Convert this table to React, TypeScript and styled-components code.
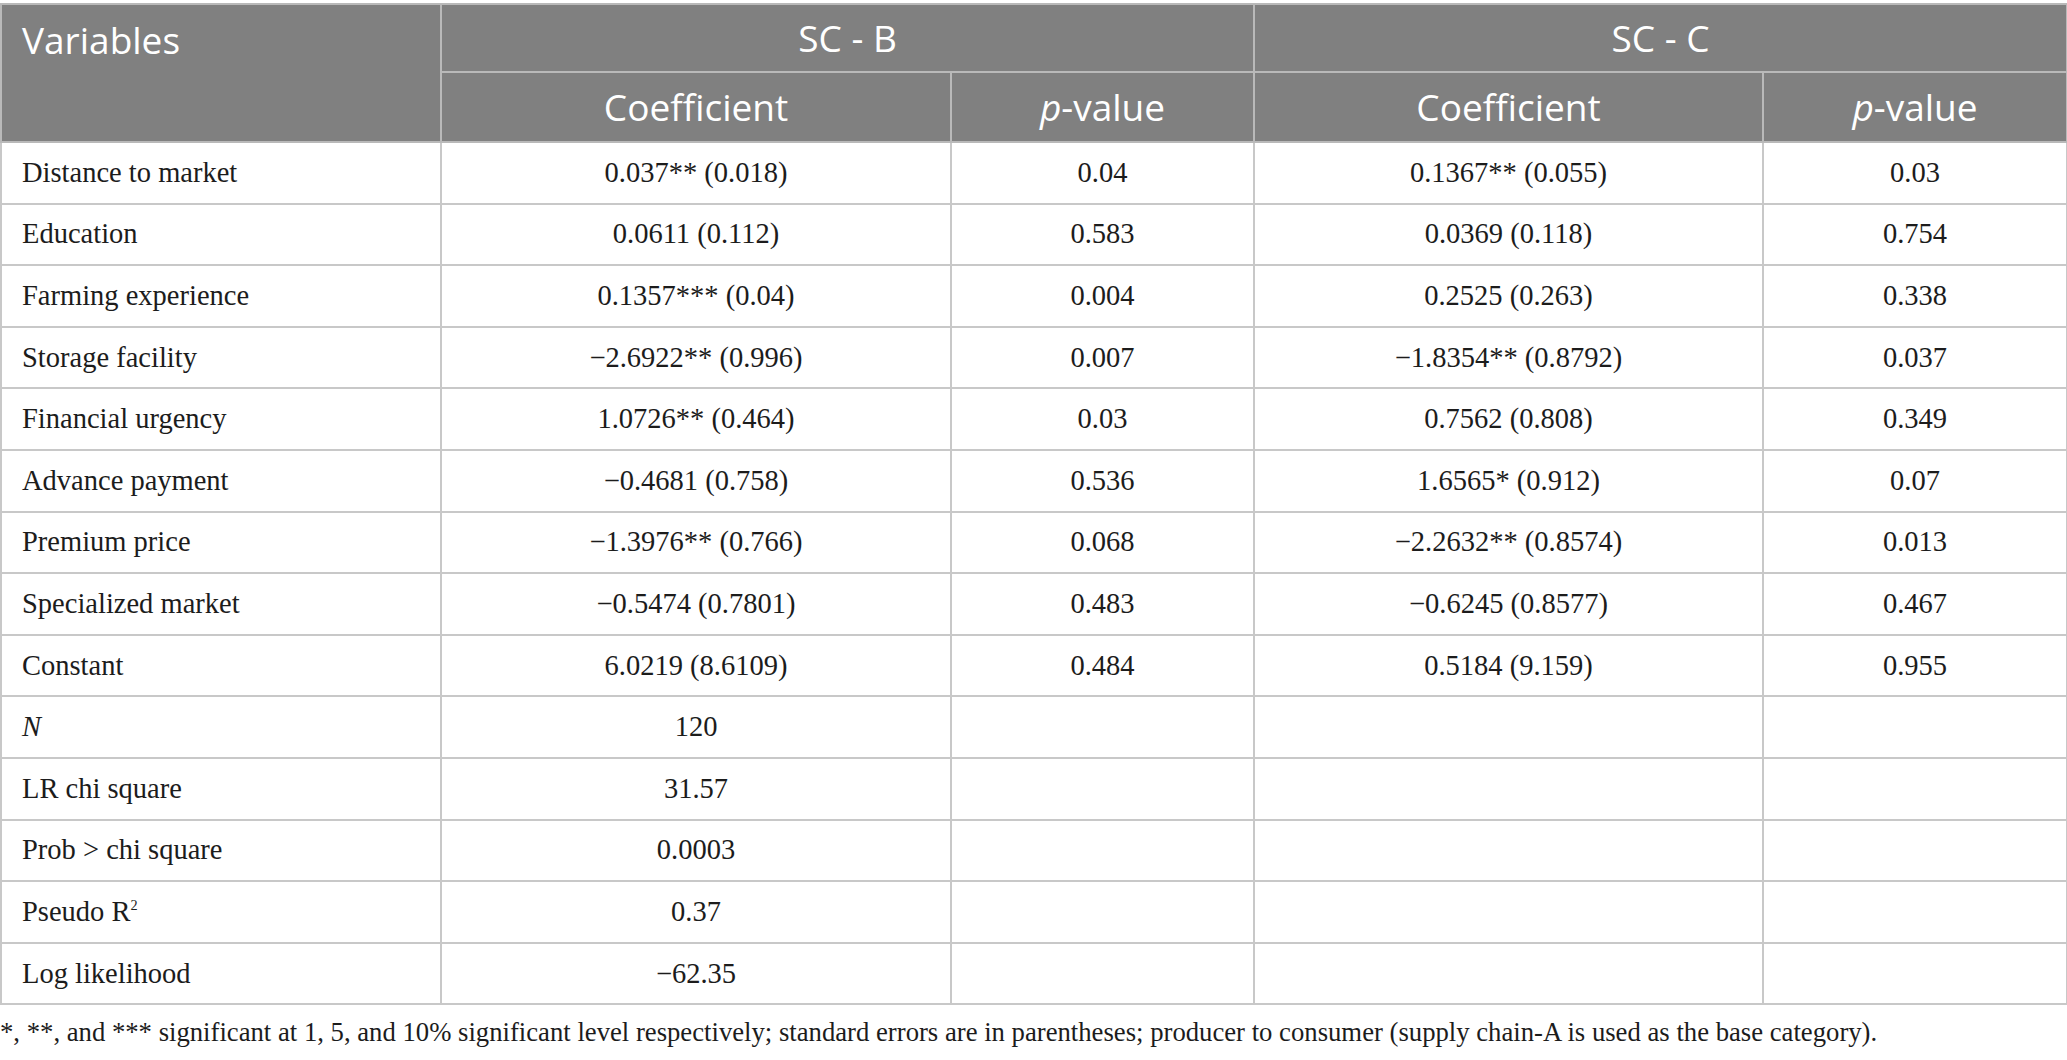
import React from "react";
import styled, { createGlobalStyle } from "styled-components";

const Global = createGlobalStyle`
  html, body { margin: 0; padding: 0; background: #ffffff; }
  body { font-family: "Liberation Serif", "Times New Roman", serif; color: #1f1f1f; }
`;

const Page = styled.div`
  padding-top: 3px;
  width: 2067px;
`;

const Table = styled.table`
  border-collapse: collapse;
  table-layout: fixed;
  width: 2066px;
`;

const HeadCell = styled.th<{ $align?: "left" | "center"; $top?: boolean }>`
  background: #808080;
  color: #ffffff;
  font-family: "Open Sans", "Noto Sans", sans-serif;
  font-weight: 400;
  font-size: 37px;
  line-height: 48px;
  border: 2px solid #b9b9b9;
  padding: ${(p) => (p.$top ? "11px 20px 0" : "0 20px")};
  text-align: ${(p) => p.$align ?? "center"};
  vertical-align: ${(p) => (p.$top ? "top" : "middle")};
`;

const HeadRow = styled.tr<{ $h: number }>`
  height: ${(p) => p.$h}px;
`;

const BodyRow = styled.tr`
  height: 61.6px;
`;

const Cell = styled.td<{ $first?: boolean }>`
  font-family: "Liberation Serif", "Times New Roman", serif;
  font-size: 28.5px;
  line-height: 32px;
  color: #1c1c1c;
  border: 2px solid #c8c8c8;
  padding: 0 20px;
  text-align: ${(p) => (p.$first ? "left" : "center")};
  vertical-align: middle;
  white-space: nowrap;
`;

const Footnote = styled.p`
  margin: 12px 0 0;
  font-family: "Liberation Serif", "Times New Roman", serif;
  font-size: 26.7px;
  line-height: 31px;
  color: #1c1c1c;
`;

const Sup = styled.sup`
  font-size: 0.5em;
  vertical-align: 0.75em;
  line-height: 0;
`;

type Row = { label: React.ReactNode; cells: string[] };

const rows: Row[] = [
  { label: "Distance to market", cells: ["0.037** (0.018)", "0.04", "0.1367** (0.055)", "0.03"] },
  { label: "Education", cells: ["0.0611 (0.112)", "0.583", "0.0369 (0.118)", "0.754"] },
  { label: "Farming experience", cells: ["0.1357*** (0.04)", "0.004", "0.2525 (0.263)", "0.338"] },
  { label: "Storage facility", cells: ["\u22122.6922** (0.996)", "0.007", "\u22121.8354** (0.8792)", "0.037"] },
  { label: "Financial urgency", cells: ["1.0726** (0.464)", "0.03", "0.7562 (0.808)", "0.349"] },
  { label: "Advance payment", cells: ["\u22120.4681 (0.758)", "0.536", "1.6565* (0.912)", "0.07"] },
  { label: "Premium price", cells: ["\u22121.3976** (0.766)", "0.068", "\u22122.2632** (0.8574)", "0.013"] },
  { label: "Specialized market", cells: ["\u22120.5474 (0.7801)", "0.483", "\u22120.6245 (0.8577)", "0.467"] },
  { label: "Constant", cells: ["6.0219 (8.6109)", "0.484", "0.5184 (9.159)", "0.955"] },
  { label: <i>N</i>, cells: ["120", "", "", ""] },
  { label: "LR chi square", cells: ["31.57", "", "", ""] },
  { label: "Prob > chi square", cells: ["0.0003", "", "", ""] },
  { label: <>Pseudo R<Sup>2</Sup></>, cells: ["0.37", "", "", ""] },
  { label: "Log likelihood", cells: ["\u221262.35", "", "", ""] },
];

const widths = [440, 510, 303, 509, 304];

export default function App() {
  return (
    <Page>
      <Global />
      <Table>
        <colgroup>
          {widths.map((w, i) => (
            <col key={i} style={{ width: w }} />
          ))}
        </colgroup>
        <thead>
          <HeadRow $h={68}>
            <HeadCell rowSpan={2} $align="left" $top>
              Variables
            </HeadCell>
            <HeadCell colSpan={2}>SC - B</HeadCell>
            <HeadCell colSpan={2}>SC - C</HeadCell>
          </HeadRow>
          <HeadRow $h={70}>
            <HeadCell>Coefficient</HeadCell>
            <HeadCell>
              <i>p</i>-value
            </HeadCell>
            <HeadCell>Coefficient</HeadCell>
            <HeadCell>
              <i>p</i>-value
            </HeadCell>
          </HeadRow>
        </thead>
        <tbody>
          {rows.map((r, i) => (
            <BodyRow key={i}>
              <Cell $first>{r.label}</Cell>
              {r.cells.map((c, j) => (
                <Cell key={j}>{c}</Cell>
              ))}
            </BodyRow>
          ))}
        </tbody>
      </Table>
      <Footnote>
        *, **, and *** significant at 1, 5, and 10% significant level respectively; standard errors are in
        parentheses; producer to consumer (supply chain-A is used as the base category).
      </Footnote>
    </Page>
  );
}
